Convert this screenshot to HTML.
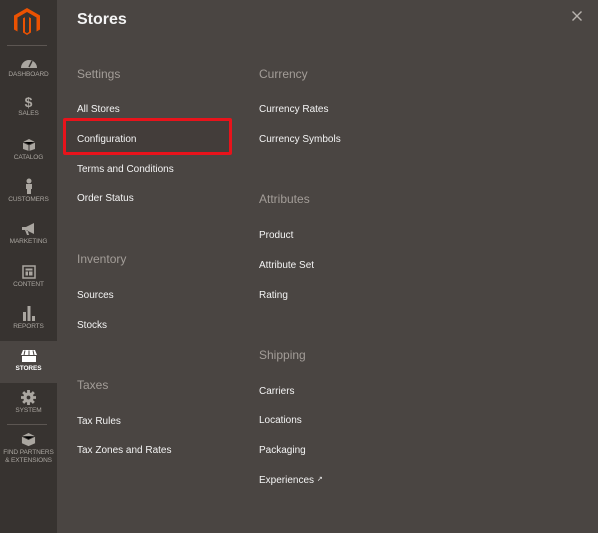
<!DOCTYPE html>
<html><head><style>
body{margin:0;width:598px;height:533px;background:#4a4542;font-family:"Liberation Sans",sans-serif;overflow:hidden;position:relative}
.sb{position:absolute;left:0;top:0;width:57px;height:533px;background:#373330}
.ni{position:absolute;left:0;width:57px;text-align:center;color:#aaa6a0;font-size:6.5px;letter-spacing:-0.1px}
.ni svg{display:block;margin:0 auto 2px}
.t{position:absolute;color:#f4f4f4;font-size:10px;white-space:nowrap}
.h{position:absolute;color:#a39d98;font-size:12px;white-space:nowrap}
.sep{position:absolute;left:7px;width:40px;height:1px;background:#5c5652}
</style></head><body>
<div class="sb">
<svg style="position:absolute;left:14px;top:8px" width="26" height="28" viewBox="0 0 26 28"><path d="M13 0L26 7.5V21.5L22.5 23.5V9.5L13 4 3.5 9.5V23.5L0 21.5V7.5Z M13 8L17 10.3V24.5L13 27 9 24.5V10.3L11 9.2V24L13 25.2 15 24V9.2Z" fill="#eb5202"/></svg>
<div class="sep" style="top:45px"></div>
<div class="ni" style="top:57px"><svg width="18" height="12" viewBox="0 0 18 12"><path d="M1 11A8 8 0 0 1 17 11Z" fill="#aaa6a0"/><path d="M9 10L12 4" stroke="#373330" stroke-width="1.5"/></svg>DASHBOARD</div>
<div class="ni" style="top:95px"><div style="font-size:14px;font-weight:bold;line-height:15px">$</div>SALES</div>
<div class="ni" style="top:138px"><svg width="14" height="14" viewBox="0 0 14 14"><path d="M7 1L13 4V11L7 13 1 11V4Z" fill="#aaa6a0"/><path d="M1 4L7 7 13 4M7 7V13" stroke="#373330"/></svg>CATALOG</div>
<div class="ni" style="top:178px"><svg width="10" height="16" viewBox="0 0 10 16"><circle cx="5" cy="3" r="2.5" fill="#aaa6a0"/><path d="M2 6H8V11H7V16H3V11H2Z" fill="#aaa6a0"/></svg>CUSTOMERS</div>
<div class="ni" style="top:222px"><svg width="16" height="14" viewBox="0 0 16 14"><path d="M1 5H5L13 1V12L5 8H1ZM4 8L6 13H8L6.5 8" fill="#aaa6a0"/></svg>MARKETING</div>
<div class="ni" style="top:265px"><svg width="14" height="14" viewBox="0 0 14 14"><rect x="1" y="1" width="12" height="12" fill="none" stroke="#aaa6a0" stroke-width="1.5"/><rect x="3.5" y="3.5" width="7" height="2" fill="#aaa6a0"/><rect x="3.5" y="6.5" width="2.5" height="4" fill="#aaa6a0"/><rect x="7" y="6.5" width="3.5" height="4" fill="#aaa6a0"/></svg>CONTENT</div>
<div class="ni" style="top:305px"><svg width="14" height="16" viewBox="0 0 14 16"><rect x="1" y="7" width="3" height="9" fill="#aaa6a0"/><rect x="5.5" y="1" width="3" height="15" fill="#aaa6a0"/><rect x="10" y="11" width="3" height="5" fill="#aaa6a0"/></svg>REPORTS</div>
<div style="position:absolute;left:0;top:341px;width:57px;height:42px;background:#4a4542"></div>
<div class="ni" style="top:349px;color:#fff;font-weight:bold"><svg width="18" height="14" viewBox="0 0 18 14"><path d="M3 1H15L17 6H1Z M2 7H16V13H2Z" fill="#fff"/><path d="M5 1.5L4 6M9 1.5V6M13 1.5L14 6" stroke="#4a4542"/></svg>STORES</div>
<div class="ni" style="top:390px"><svg width="15" height="15" viewBox="0 0 16 16"><circle cx="8" cy="8" r="5.5" fill="#aaa6a0"/><path d="M8 0V16M0 8H16M2.3 2.3L13.7 13.7M13.7 2.3L2.3 13.7" stroke="#aaa6a0" stroke-width="3"/><circle cx="8" cy="8" r="2" fill="#373330"/></svg>SYSTEM</div>
<div class="sep" style="top:424px"></div>
<div class="ni" style="top:432px;line-height:8px"><svg width="15" height="15" viewBox="0 0 16 16"><path d="M8 1L15 4.5V12L8 15 1 12V4.5Z" fill="#aaa6a0"/><path d="M1 4.5L8 8 15 4.5" stroke="#373330"/></svg>FIND PARTNERS<br>&amp; EXTENSIONS</div>
</div>
<div class="t" style="left:77px;top:11px;font-size:16px;font-weight:bold">Stores</div>
<svg style="position:absolute;left:572px;top:11px" width="10" height="10" viewBox="0 0 10 10"><path d="M0.5 0.5L9.5 9.5M9.5 0.5L0.5 9.5" stroke="#b8b3ae" stroke-width="1.4"/></svg>
<div class="h" style="left:77px;top:67px">Settings</div>
<div class="t" style="left:77px;top:104px">All Stores</div>
<div style="position:absolute;left:63px;top:118px;width:163px;height:31px;border:3px solid #e8131b;border-radius:2px;background:#433d3a"></div>
<div class="t" style="left:77px;top:134px">Configuration</div>
<div class="t" style="left:77px;top:164px">Terms and Conditions</div>
<div class="t" style="left:77px;top:193px">Order Status</div>
<div class="h" style="left:77px;top:252px">Inventory</div>
<div class="t" style="left:77px;top:290px">Sources</div>
<div class="t" style="left:77px;top:320px">Stocks</div>
<div class="h" style="left:77px;top:378px">Taxes</div>
<div class="t" style="left:77px;top:416px">Tax Rules</div>
<div class="t" style="left:77px;top:445px">Tax Zones and Rates</div>
<div class="h" style="left:259px;top:67px">Currency</div>
<div class="t" style="left:259px;top:104px">Currency Rates</div>
<div class="t" style="left:259px;top:134px">Currency Symbols</div>
<div class="h" style="left:259px;top:192px">Attributes</div>
<div class="t" style="left:259px;top:230px">Product</div>
<div class="t" style="left:259px;top:260px">Attribute Set</div>
<div class="t" style="left:259px;top:290px">Rating</div>
<div class="h" style="left:259px;top:348px">Shipping</div>
<div class="t" style="left:259px;top:386px">Carriers</div>
<div class="t" style="left:259px;top:415px">Locations</div>
<div class="t" style="left:259px;top:445px">Packaging</div>
<div class="t" style="left:259px;top:475px">Experiences <span style="font-size:7px;vertical-align:top">&#x2197;</span></div>
</body></html>
